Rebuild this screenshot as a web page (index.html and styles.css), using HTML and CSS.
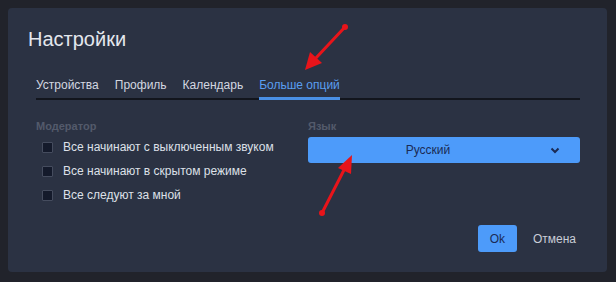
FILE: index.html
```html
<!DOCTYPE html>
<html lang="ru">
<head>
<meta charset="utf-8">
<title>Настройки</title>
<link rel="stylesheet" href="styles.css">
</head>
<body>
<div class="dialog">
  <h1 class="title">Настройки</h1>
  <div class="content">
    <nav class="tabs">
      <span class="tab">Устройства</span>
      <span class="tab">Профиль</span>
      <span class="tab">Календарь</span>
      <span class="tab active">Больше опций</span>
    </nav>
    <div class="columns">
      <section class="col">
        <div class="label">Модератор</div>
        <label class="check"><span class="box"></span>Все начинают с выключенным звуком</label>
        <label class="check"><span class="box"></span>Все начинают в скрытом режиме</label>
        <label class="check"><span class="box"></span>Все следуют за мной</label>
      </section>
      <section class="col">
        <div class="label">Язык</div>
        <div class="select">
          <span>Русский</span>
          <svg class="chev" width="10" height="7" viewBox="0 0 10 7"><path d="M1.5 1.5 L5 5 L8.5 1.5" fill="none" stroke="#1b2b55" stroke-width="2"/></svg>
        </div>
      </section>
    </div>
    <div class="footer">
      <button class="ok">Ok</button>
      <button class="cancel">Отмена</button>
    </div>
  </div>
</div>
<svg class="arrow arrow-top" width="60" height="60" viewBox="0 0 60 60">
  <line x1="50" y1="8" x2="20" y2="40" stroke="#e8141a" stroke-width="3" stroke-linecap="round"/>
  <circle cx="50" cy="8" r="3" fill="#e8141a"/>
  <polygon points="10,51 15,33 27,44" fill="#e8141a"/>
</svg>
<svg class="arrow arrow-bottom" width="60" height="80" viewBox="0 0 60 80">
  <line x1="17" y1="70" x2="40" y2="25" stroke="#e8141a" stroke-width="3" stroke-linecap="round"/>
  <circle cx="17" cy="70" r="3" fill="#e8141a"/>
  <polygon points="47,12 33,25 46,31" fill="#e8141a"/>
</svg>
</body>
</html>
```
FILE: styles.css
```css
html, body {
  margin: 0;
  padding: 0;
}
body {
  width: 616px;
  height: 282px;
  background: #21232b;
  padding: 8px;
  box-sizing: border-box;
  font-family: "Liberation Sans", Arial, sans-serif;
  position: relative;
  overflow: hidden;
}
.dialog {
  width: 599px;
  height: 264px;
  background: #2b3243;
  border-radius: 4px;
  box-sizing: border-box;
  padding: 18px 27px 0 20px;
}
.title {
  margin: 0;
  font-size: 20px;
  font-weight: 400;
  color: #e4e7ee;
  line-height: 26px;
}
.content {
  padding-left: 8px;
}
.tabs {
  margin-top: 21px;
  display: flex;
  gap: 16px;
  border-bottom: 2px solid #12151d;
  height: 25px;
}
.tab {
  font-size: 12px;
  color: #d3d7e0;
  line-height: 25px;
  box-sizing: border-box;
  margin-bottom: -2px;
  height: 27px;
}
.tab.active {
  color: #5a9ef0;
  border-bottom: 3px solid #4a90e6;
}
.columns {
  display: grid;
  grid-template-columns: 1fr 1fr;
  margin-top: 19px;
}
.label {
  font-size: 11px;
  font-weight: 700;
  color: #535a6b;
  line-height: 14px;
}
.check {
  display: flex;
  align-items: center;
  height: 24px;
  font-size: 12px;
  color: #dde0e8;
  padding-left: 6px;
}
.col .label + .check {
  margin-top: 2px;
}
.box {
  width: 9px;
  height: 9px;
  background: #141a2b;
  border: 1px solid #454c5e;
  border-radius: 1px;
  margin-right: 10px;
  flex: none;
}
.select {
  margin-top: 4px;
  height: 26px;
  background: #4d9bfa;
  border-radius: 3px;
  display: flex;
  align-items: center;
  justify-content: center;
  padding-right: 32px;
  position: relative;
  font-size: 12px;
  color: #1b2b55;
}
.chev {
  position: absolute;
  right: 20px;
  top: 10px;
}
.footer {
  display: flex;
  justify-content: flex-end;
  align-items: center;
  margin-top: 18px;
  gap: 8px;
}
.ok {
  width: 39px;
  height: 27px;
  border: none;
  border-radius: 3px;
  background: #4d9bfa;
  color: #1b2b55;
  font-family: inherit;
  font-size: 12px;
}
.cancel {
  background: none;
  border: none;
  color: #c9cdd7;
  font-family: inherit;
  font-size: 12px;
  padding: 0 4px 0 8px;
}
.arrow {
  position: absolute;
}
.arrow-top {
  left: 295px;
  top: 19px;
}
.arrow-bottom {
  left: 305px;
  top: 143px;
}
```
